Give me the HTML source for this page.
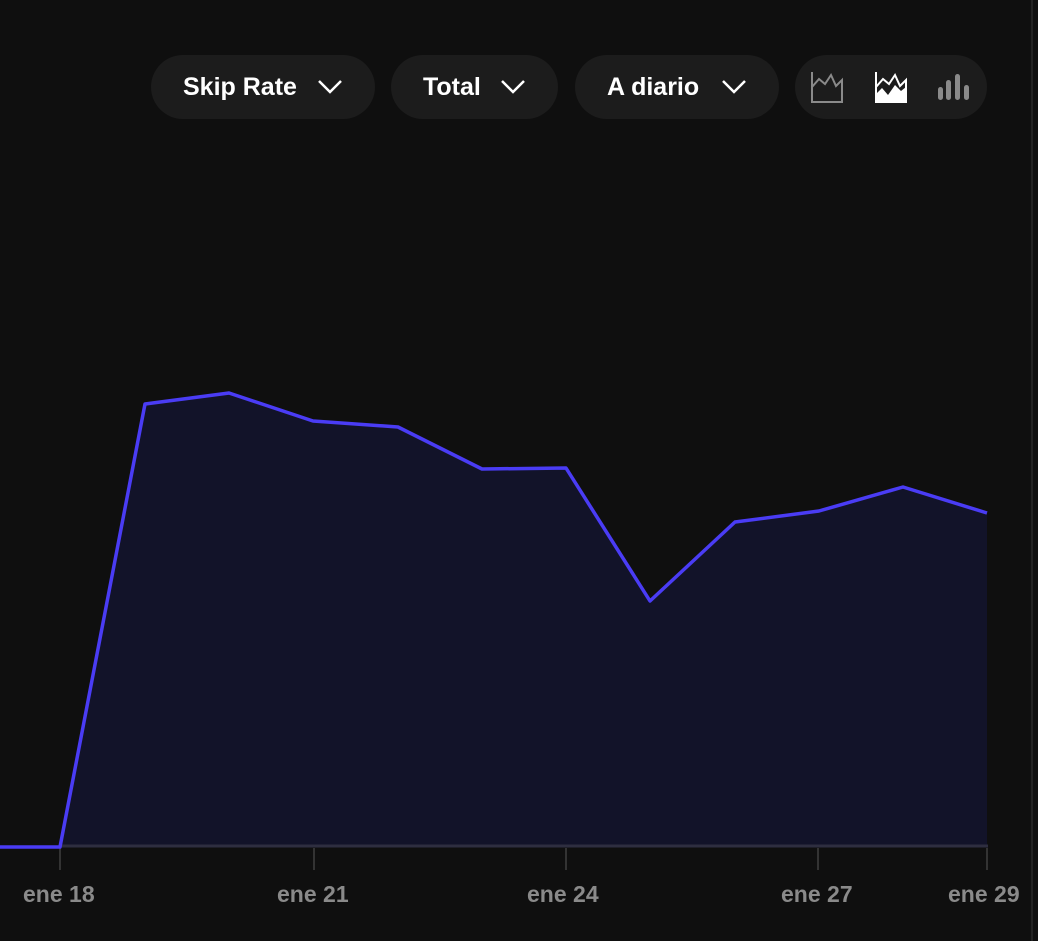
<!DOCTYPE html>
<html><head><meta charset="utf-8"><style>
html,body{margin:0;padding:0;background:#0f0f0f;width:1038px;height:941px;overflow:hidden;font-family:"Liberation Sans",sans-serif}
.pill{position:absolute;top:55px;height:64px;border-radius:32px;background:#1c1c1c;color:#fff;font-weight:bold;font-size:25px;line-height:64px;box-sizing:border-box;padding-left:32px}
.pill svg{position:absolute;right:32px;top:22px}
.lbl{position:absolute;top:881px;color:#8a8a8a;font-weight:bold;font-size:23px;letter-spacing:0px}
</style></head><body>
<div style="position:absolute;left:1031px;top:0;width:2px;height:941px;background:#222"></div>
<div class="pill" style="left:151px;width:224px">Skip Rate<svg width="26" height="18" viewBox="0 0 26 18"><path d="M2 4 L13 15 L24 4" stroke="#fff" stroke-width="2.5" fill="none"/></svg></div>
<div class="pill" style="left:391px;width:167px">Total<svg width="26" height="18" viewBox="0 0 26 18"><path d="M2 4 L13 15 L24 4" stroke="#fff" stroke-width="2.5" fill="none"/></svg></div>
<div class="pill" style="left:575px;width:204px">A diario<svg width="26" height="18" viewBox="0 0 26 18"><path d="M2 4 L13 15 L24 4" stroke="#fff" stroke-width="2.5" fill="none"/></svg></div>
<div style="position:absolute;left:795px;top:55px;width:192px;height:64px;border-radius:32px;background:#1c1c1c"></div>
<svg style="position:absolute;left:0;top:0" width="1038" height="941">
<g stroke="#8a8a8a" stroke-width="2" fill="none">
<path d="M812 72 V102 H842 V80 L836 86 L831 75 L825 84 L819 79 L812 87"/>
</g>
<g>
<path d="M876 72 V102 H906 V80 L900 86 L895 75 L889 84 L883 79 L876 87" stroke="#fff" stroke-width="2" fill="none"/>
<path d="M876 102 V94 L882 88 L888 95 L895 85 L901 91 L906 87 V102 Z" fill="#fff"/>
</g>
<g fill="#8a8a8a">
<rect x="938" y="87" width="5" height="13" rx="2.5"/><rect x="946" y="80" width="5" height="20" rx="2.5"/><rect x="955" y="74" width="5" height="26" rx="2.5"/><rect x="964" y="85" width="5" height="15" rx="2.5"/>
</g>
<path d="M60 847 L145 404 L229 393 L313 421 L398 427 L482 469 L566 468 L650 601 L735 522 L819 511 L903 487 L987 513 L987 847 Z" fill="#121329"/>
<line x1="60" y1="846" x2="988" y2="846" stroke="#2e2e40" stroke-width="3"/>
<g stroke="#333" stroke-width="2">
<line x1="60" y1="848" x2="60" y2="870"/><line x1="314" y1="848" x2="314" y2="870"/><line x1="566" y1="848" x2="566" y2="870"/><line x1="818" y1="848" x2="818" y2="870"/><line x1="987" y1="848" x2="987" y2="870"/>
</g>
<path d="M0 847 L60 847 L145 404 L229 393 L313 421 L398 427 L482 469 L566 468 L650 601 L735 522 L819 511 L903 487 L987 513" stroke="#4a3cf5" stroke-width="3.5" fill="none" stroke-linejoin="round"/>
</svg>
<div class="lbl" style="left:23px">ene 18</div>
<div class="lbl" style="left:277px">ene 21</div>
<div class="lbl" style="left:527px">ene 24</div>
<div class="lbl" style="left:781px">ene 27</div>
<div class="lbl" style="left:948px">ene 29</div>
</body></html>
